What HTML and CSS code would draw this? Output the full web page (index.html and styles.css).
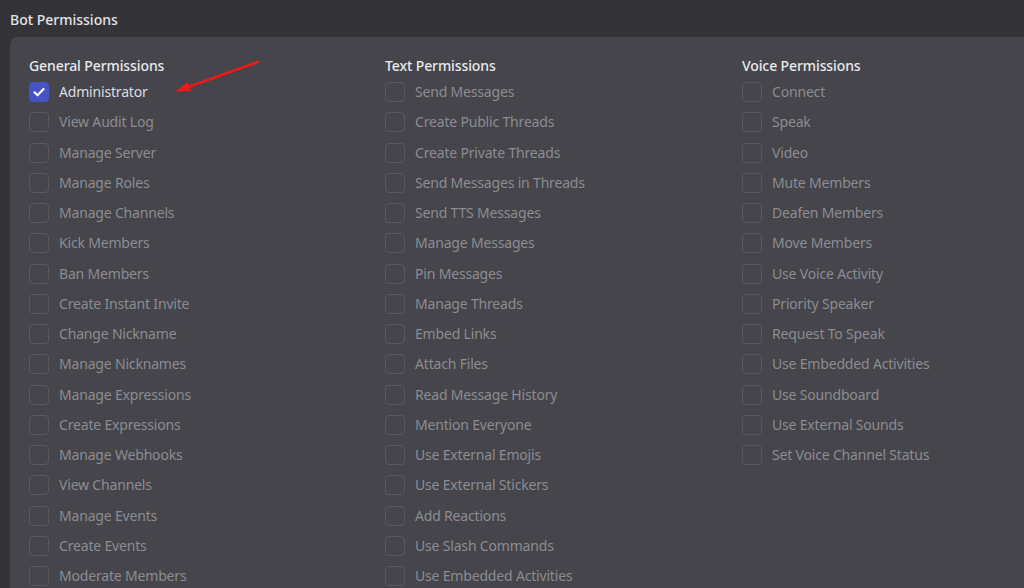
FILE: index.html
```html
<!DOCTYPE html>
<html>
<head>
<meta charset="utf-8">
<link rel="stylesheet" href="styles.css">
</head>
<body>
<div class="page">
  <div class="title">Bot Permissions</div>
  <div class="panel">
    <div class="col">
      <div class="head">General Permissions</div>
      <div class="row on"><span class="box"><svg viewBox="0 0 20 20" width="20" height="20"><path d="M5.5 10.3l3 3 6-6.3" fill="none" stroke="#fff" stroke-width="2.2" stroke-linecap="round" stroke-linejoin="round"/></svg></span><span class="lbl">Administrator</span></div>
      <div class="row"><span class="box"></span><span class="lbl">View Audit Log</span></div>
      <div class="row"><span class="box"></span><span class="lbl">Manage Server</span></div>
      <div class="row"><span class="box"></span><span class="lbl">Manage Roles</span></div>
      <div class="row"><span class="box"></span><span class="lbl">Manage Channels</span></div>
      <div class="row"><span class="box"></span><span class="lbl">Kick Members</span></div>
      <div class="row"><span class="box"></span><span class="lbl">Ban Members</span></div>
      <div class="row"><span class="box"></span><span class="lbl">Create Instant Invite</span></div>
      <div class="row"><span class="box"></span><span class="lbl">Change Nickname</span></div>
      <div class="row"><span class="box"></span><span class="lbl">Manage Nicknames</span></div>
      <div class="row"><span class="box"></span><span class="lbl">Manage Expressions</span></div>
      <div class="row"><span class="box"></span><span class="lbl">Create Expressions</span></div>
      <div class="row"><span class="box"></span><span class="lbl">Manage Webhooks</span></div>
      <div class="row"><span class="box"></span><span class="lbl">View Channels</span></div>
      <div class="row"><span class="box"></span><span class="lbl">Manage Events</span></div>
      <div class="row"><span class="box"></span><span class="lbl">Create Events</span></div>
      <div class="row"><span class="box"></span><span class="lbl">Moderate Members</span></div>
    </div>
    <div class="col">
      <div class="head">Text Permissions</div>
      <div class="row"><span class="box"></span><span class="lbl">Send Messages</span></div>
      <div class="row"><span class="box"></span><span class="lbl">Create Public Threads</span></div>
      <div class="row"><span class="box"></span><span class="lbl">Create Private Threads</span></div>
      <div class="row"><span class="box"></span><span class="lbl">Send Messages in Threads</span></div>
      <div class="row"><span class="box"></span><span class="lbl">Send TTS Messages</span></div>
      <div class="row"><span class="box"></span><span class="lbl">Manage Messages</span></div>
      <div class="row"><span class="box"></span><span class="lbl">Pin Messages</span></div>
      <div class="row"><span class="box"></span><span class="lbl">Manage Threads</span></div>
      <div class="row"><span class="box"></span><span class="lbl">Embed Links</span></div>
      <div class="row"><span class="box"></span><span class="lbl">Attach Files</span></div>
      <div class="row"><span class="box"></span><span class="lbl">Read Message History</span></div>
      <div class="row"><span class="box"></span><span class="lbl">Mention Everyone</span></div>
      <div class="row"><span class="box"></span><span class="lbl">Use External Emojis</span></div>
      <div class="row"><span class="box"></span><span class="lbl">Use External Stickers</span></div>
      <div class="row"><span class="box"></span><span class="lbl">Add Reactions</span></div>
      <div class="row"><span class="box"></span><span class="lbl">Use Slash Commands</span></div>
      <div class="row"><span class="box"></span><span class="lbl">Use Embedded Activities</span></div>
    </div>
    <div class="col">
      <div class="head">Voice Permissions</div>
      <div class="row"><span class="box"></span><span class="lbl">Connect</span></div>
      <div class="row"><span class="box"></span><span class="lbl">Speak</span></div>
      <div class="row"><span class="box"></span><span class="lbl">Video</span></div>
      <div class="row"><span class="box"></span><span class="lbl">Mute Members</span></div>
      <div class="row"><span class="box"></span><span class="lbl">Deafen Members</span></div>
      <div class="row"><span class="box"></span><span class="lbl">Move Members</span></div>
      <div class="row"><span class="box"></span><span class="lbl">Use Voice Activity</span></div>
      <div class="row"><span class="box"></span><span class="lbl">Priority Speaker</span></div>
      <div class="row"><span class="box"></span><span class="lbl">Request To Speak</span></div>
      <div class="row"><span class="box"></span><span class="lbl">Use Embedded Activities</span></div>
      <div class="row"><span class="box"></span><span class="lbl">Use Soundboard</span></div>
      <div class="row"><span class="box"></span><span class="lbl">Use External Sounds</span></div>
      <div class="row"><span class="box"></span><span class="lbl">Set Voice Channel Status</span></div>
    </div>
    <svg class="arrow" width="100" height="45" viewBox="0 0 100 45">
      <line x1="88" y1="5" x2="14" y2="31.5" stroke="#f01818" stroke-width="2.6" stroke-linecap="round"/>
      <polygon points="5,34.5 18,25 21,34" fill="#f01818"/>
    </svg>
  </div>
</div>
</body>
</html>
```
FILE: styles.css
```css
html, body {
  margin: 0;
  padding: 0;
  background: #333338;
  height: 588px;
  overflow: hidden;
}
.page {
  font-family: "Noto Sans", "Open Sans", sans-serif;
  padding: 11px 0 0 10px;
}
.title {
  color: #e3e4e8;
  font-size: 14px;
  font-weight: 500;
  line-height: 18px;
  height: 18px;
  margin-bottom: 8px;
}
.panel {
  position: relative;
  background: #45454b;
  border-radius: 8px 0 0 0;
  padding: 19px 0 0 19px;
  display: grid;
  grid-template-columns: 356px 357px 1fr;
  height: 560px;
}
.head {
  color: #e9eaee;
  font-size: 14px;
  font-weight: 500;
  line-height: 20px;
  height: 20px;
  margin-bottom: 1px;
  letter-spacing: -0.1px;
}
.row {
  display: flex;
  align-items: center;
  height: 30.25px;
}
.box {
  width: 18px;
  height: 18px;
  border: 1px solid #58585e;
  border-radius: 4px;
  box-sizing: content-box;
  margin-right: 10px;
  flex: none;
  display: flex;
}
.box svg {
  margin: -1px;
}
.row.on .box {
  background: #4752c4;
  border-color: #4752c4;
}
.lbl {
  color: #8c8c92;
  font-size: 14px;
  line-height: 20px;
  letter-spacing: -0.18px;
}
.row.on .lbl {
  color: #dcdde1;
}
.arrow {
  position: absolute;
  left: 160px;
  top: 20px;
}
```
